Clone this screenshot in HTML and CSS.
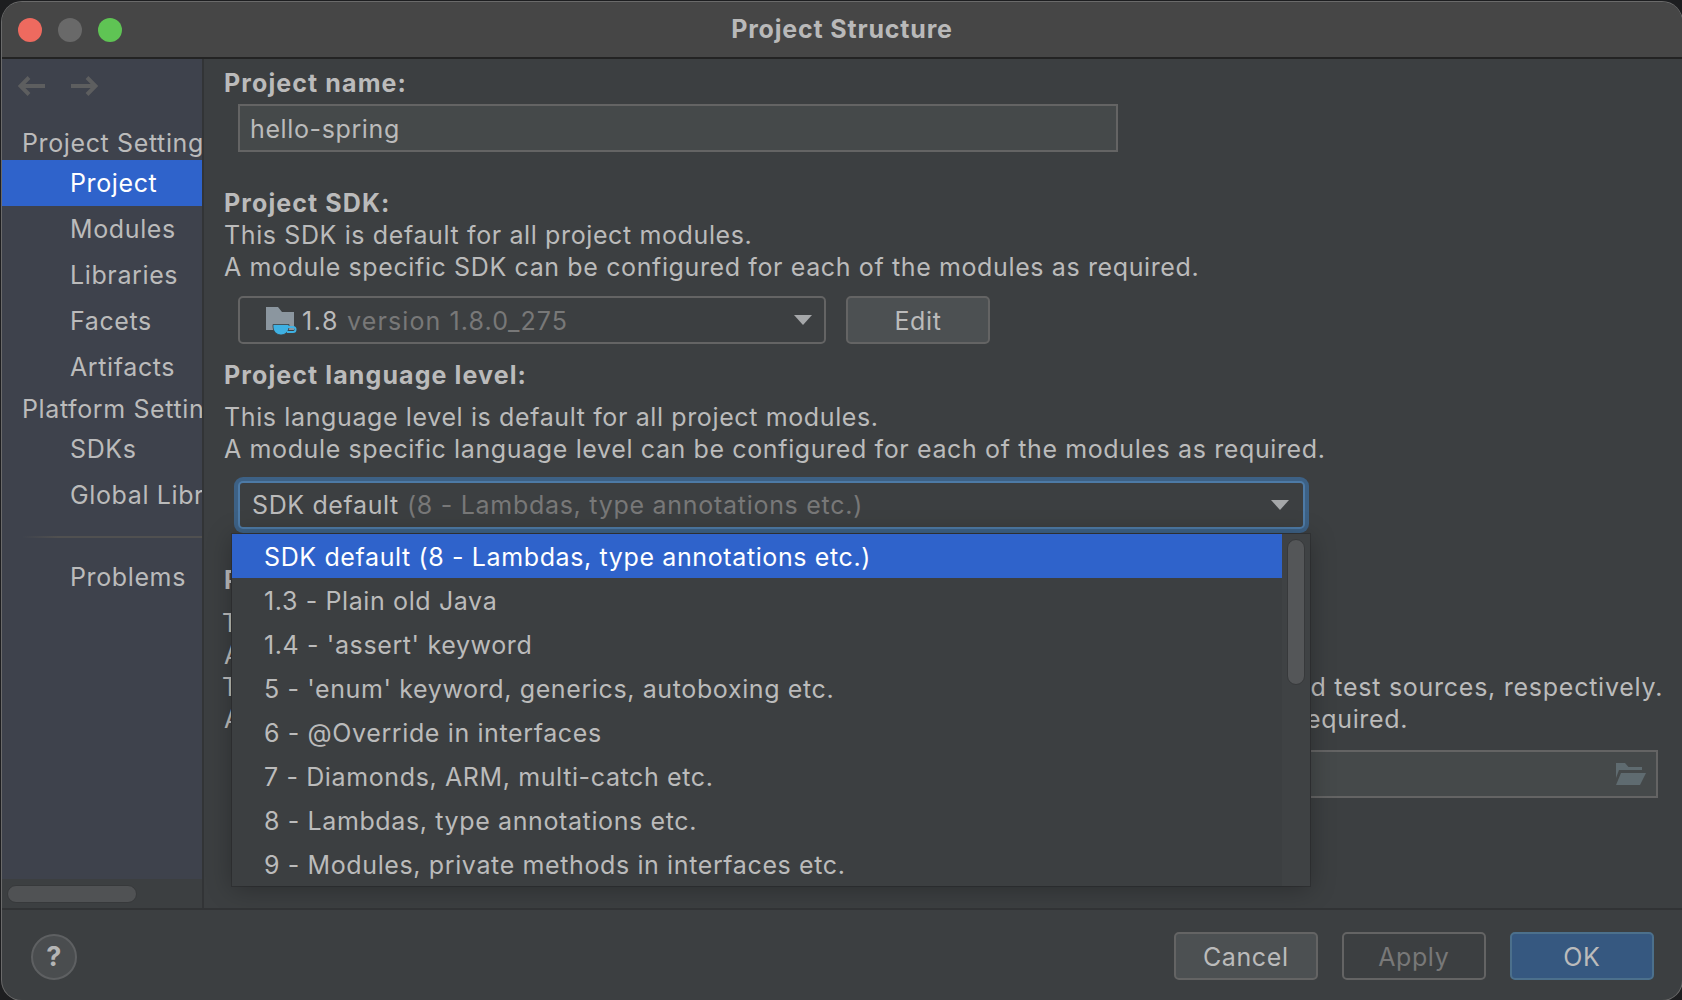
FILE: index.html
```html
<!DOCTYPE html>
<html lang="en">
<head>
<meta charset="utf-8">
<title>Project Structure</title>
<link rel="stylesheet" href="styles.css">
</head>
<body>
<div class="window">
  <header class="titlebar">
    <div class="lights"><span class="light red"></span><span class="light grey"></span><span class="light green"></span></div>
    <div class="title">Project Structure</div>
  </header>
  <div class="body">
    <aside class="sidebar">
      <div class="nav-arrows">
        <svg width="28" height="20" viewBox="0 0 28 20"><path d="M11 1.5 2.5 10l8.5 8.5M3 10h24" fill="none" stroke="#5d5e5f" stroke-width="4"/></svg>
        <svg width="28" height="20" viewBox="0 0 28 20"><path d="M17 1.5l8.5 8.5-8.5 8.5M25 10H1" fill="none" stroke="#5d5e5f" stroke-width="4"/></svg>
      </div>
      <div class="side-head first">Project Settings</div>
      <div class="side-item selected">Project</div>
      <div class="side-item">Modules</div>
      <div class="side-item">Libraries</div>
      <div class="side-item">Facets</div>
      <div class="side-item">Artifacts</div>
      <div class="side-head second">Platform Settings</div>
      <div class="side-item sdks">SDKs</div>
      <div class="side-item">Global Libraries</div>
      <div class="side-sep"></div>
      <div class="side-item">Problems</div>
      <div class="side-scroll"><div class="side-thumb"></div></div>
    </aside>
    <main class="main">
      <div class="label name-label">Project name:</div>
      <div class="field name-field">hello-spring</div>

      <div class="label sdk-label">Project SDK:</div>
      <div class="line">This SDK is default for all project modules.</div>
      <div class="line">A module specific SDK can be configured for each of the modules as required.</div>
      <div class="sdk-row">
        <div class="combo sdk-combo">
          <svg class="jdk-icon" width="32" height="30" viewBox="0 0 32 30"><path d="M1 2h12l4 5h12v18H1z" fill="#8b969f"/><path d="M8 19.5h16v2.5a8 8 0 0 1-8 8 8 8 0 0 1-8-8z" fill="#3fb1e3" stroke="#3c3f41" stroke-width=".8"/><path d="M23 22h5a2.5 2.5 0 0 1 0 5h-6" fill="none" stroke="#3fb1e3" stroke-width="2"/></svg>
          <span class="sdk-name">1.8</span><span class="muted">version 1.8.0_275</span>
          <span class="caret"></span>
        </div>
        <div class="button edit">Edit</div>
      </div>

      <div class="label lang-label">Project language level:</div>
      <div class="line lang-line">This language level is default for all project modules.</div>
      <div class="line">A module specific language level can be configured for each of the modules as required.</div>
      <div class="combo lang-combo">
        <span>SDK default</span><span class="muted">(8 - Lambdas, type annotations etc.)</span>
        <span class="caret"></span>
      </div>

      <div class="label output-label">Project compiler output:</div>
      <div class="line output-first">This path is used to store all project compilation results.</div>
      <div class="line">A directory corresponding to each module is created under this path.</div>
      <div class="line output-long">This directory contains two subdirectories: Production and Test for production code and test sources, respectively.</div>
      <div class="line output-last">A module specific compiler output path can be configured for each of the modules as required.</div>
      <div class="field output-field">
        <svg width="30" height="22" viewBox="0 0 30 22"><path d="M0 0h9l3.5 4H26v3H3L0 15z" fill="#5f6b70"/><path d="M5 10h25l-6 12H0z" fill="#5f6b70"/></svg>
      </div>

      <div class="popup">
        <div class="popup-list">
          <div class="popup-row active">SDK default (8 - Lambdas, type annotations etc.)</div>
          <div class="popup-row">1.3 - Plain old Java</div>
          <div class="popup-row">1.4 - 'assert' keyword</div>
          <div class="popup-row">5 - 'enum' keyword, generics, autoboxing etc.</div>
          <div class="popup-row">6 - @Override in interfaces</div>
          <div class="popup-row">7 - Diamonds, ARM, multi-catch etc.</div>
          <div class="popup-row">8 - Lambdas, type annotations etc.</div>
          <div class="popup-row">9 - Modules, private methods in interfaces etc.</div>
        </div>
        <div class="popup-scroll"><div class="popup-thumb"></div></div>
      </div>
    </main>
  </div>
  <footer class="footer">
    <div class="help">?</div>
    <div class="actions">
      <div class="button cancel">Cancel</div>
      <div class="button apply">Apply</div>
      <div class="button ok">OK</div>
    </div>
  </footer>
</div>
</body>
</html>
```
FILE: styles.css
```css
* { box-sizing: border-box; }
html, body { margin: 0; height: 1000px; overflow: hidden; background: #1d1e20; }
body { font-family: Inter, "Noto Sans", sans-serif; font-size: 25px; letter-spacing: .62px; color: #bbbbbb; padding: 2px 0 0 2px; }
.window { width: 1680px; height: 998px; background: #3c3f41; border-radius: 20px; overflow: hidden; display: flex; flex-direction: column; box-shadow: 0 0 0 1px #6a6a6a; }
.titlebar { height: 57px; flex: none; background: #464646; border-bottom: 2px solid #232323; position: relative; display: flex; align-items: center; justify-content: center; }
.lights { position: absolute; left: 16px; top: 16px; display: flex; gap: 16px; }
.light { width: 24px; height: 24px; border-radius: 50%; }
.red { background: #ee6a5f; }
.grey { background: #696969; }
.green { background: #5fc454; }
.title { font-weight: 700; font-size: 25px; letter-spacing: .82px; color: #b9b9b9; margin-top: -2px; }
.body { height: 851px; flex: none; display: flex; border-bottom: 2px solid #313335; }
.sidebar { width: 202px; flex: none; background: #3e424c; border-right: 2px solid #323436; position: relative; overflow: hidden; white-space: nowrap; }
.nav-arrows { display: flex; gap: 24px; padding: 17px 0 0 16px; height: 57px; }
.side-head { padding-left: 20px; height: 32px; line-height: 32px; }
.side-head.first { margin-top: 11px; margin-bottom: 1px; }
.side-head.second { margin-top: 3px; }
.side-item { padding-left: 68px; height: 46px; line-height: 46px; }
.side-item.selected { background: #2f63cb; color: #ffffff; }
.side-item.sdks { height: 47px; line-height: 48px; }
.side-sep { height: 2px; margin: 18px 0 16px 20px; background: linear-gradient(to right, #3e424c, #505050 20%); }
.side-scroll { position: absolute; left: 0; right: 0; bottom: 0; height: 29px; background: #3c3f41; padding: 6px 0 0 5px; }
.side-thumb { width: 130px; height: 18px; border-radius: 9px; background: #505254; border: 1px solid #37393b; }
.main { flex: 1; min-width: 0; padding: 8px 0 0 20px; position: relative; white-space: nowrap; overflow: hidden; }
.label { font-weight: 700; letter-spacing: 1.1px; height: 32px; line-height: 32px; }
.line { height: 32px; line-height: 32px; }
.field { height: 48px; background: #45494a; border: 2px solid #646464; line-height: 46px; padding-left: 10px; margin-left: 14px; }
.name-field { width: 880px; margin-top: 5px; }
.sdk-label { margin-top: 35px; }
.sdk-row { display: flex; gap: 20px; margin: 13px 0 0 14px; }
.combo { position: relative; display: flex; align-items: center; border: 2px solid #646464; border-radius: 5px; background: #3c3f41; }
.sdk-combo { width: 588px; height: 48px; padding: 0 0 0 25px; line-height: 46px; }
.jdk-icon { flex: none; margin-right: 5px; }
.sdk-name { margin-right: 8px; letter-spacing: 1.6px; }
.muted { color: #787878; margin-left: 8px; letter-spacing: .72px; }
.sdk-combo .sdk-name, .sdk-combo .muted { position: relative; top: 1px; }
.sdk-combo .muted { margin-left: 0; letter-spacing: 1.1px; }
.caret { position: absolute; right: 14px; top: 50%; margin-top: -5px; width: 0; height: 0; border-left: 9px solid transparent; border-right: 9px solid transparent; border-top: 10px solid #a5a7a9; }
.sdk-combo .caret { right: 12px; }
.button { width: 144px; height: 48px; line-height: 46px; text-align: center; border: 2px solid #646464; border-radius: 5px; background: #4c5052; }
.lang-label { margin-top: 15px; }
.lang-line { margin-top: 10px; }
.lang-combo { margin: 16px 0 0 14px; width: 1067px; height: 48px; padding-left: 12px; border-color: #4d7aa6; box-shadow: 0 0 0 4px #3d6185; }
.lang-combo .muted { margin-left: 8px; }
.output-label { margin-top: 35px; }
.output-first { margin-top: 11px; margin-left: -2px; }
.output-long { margin-left: -2px; letter-spacing: .74px; }
.output-last { letter-spacing: .66px; }
.output-field { margin-top: 15px; margin-left: 14px; width: 1420px; display: flex; align-items: center; justify-content: flex-end; padding-right: 10px; }
.popup { position: absolute; left: 28px; top: 475px; width: 1078px; height: 352px; background: #3c3f41; display: flex; box-shadow: 0 3px 24px rgba(0,0,0,.28), 0 0 0 1px #333537; }
.popup-list { width: 1050px; flex: none; overflow: hidden; }
.popup-row { height: 44px; line-height: 46px; padding-left: 32px; }
.popup-row.active { background: #2f63cb; color: #ffffff; }
.popup-scroll { flex: 1; padding: 5px 0 0 5px; background: #3f4244; }
.popup-thumb { width: 18px; height: 146px; border-radius: 9px; background: #545658; border: 1px solid #37393b; }
.footer { flex: 1; display: flex; align-items: flex-start; justify-content: space-between; padding: 22px 28.5px 0 29px; }
.help { width: 46px; height: 46px; border-radius: 50%; background: #4a4d4f; border: 2px solid #5e6062; text-align: center; line-height: 42px; font-weight: 700; font-size: 27px; color: #b5b5b5; margin-top: 2px; }
.actions { display: flex; gap: 24.5px; }
.actions .button { width: 143.5px; height: 48px; line-height: 46px; }
.apply { background: #3c3f41; color: #787878; }
.actions .ok { background: #365880; border-color: #4c708c; }
```
